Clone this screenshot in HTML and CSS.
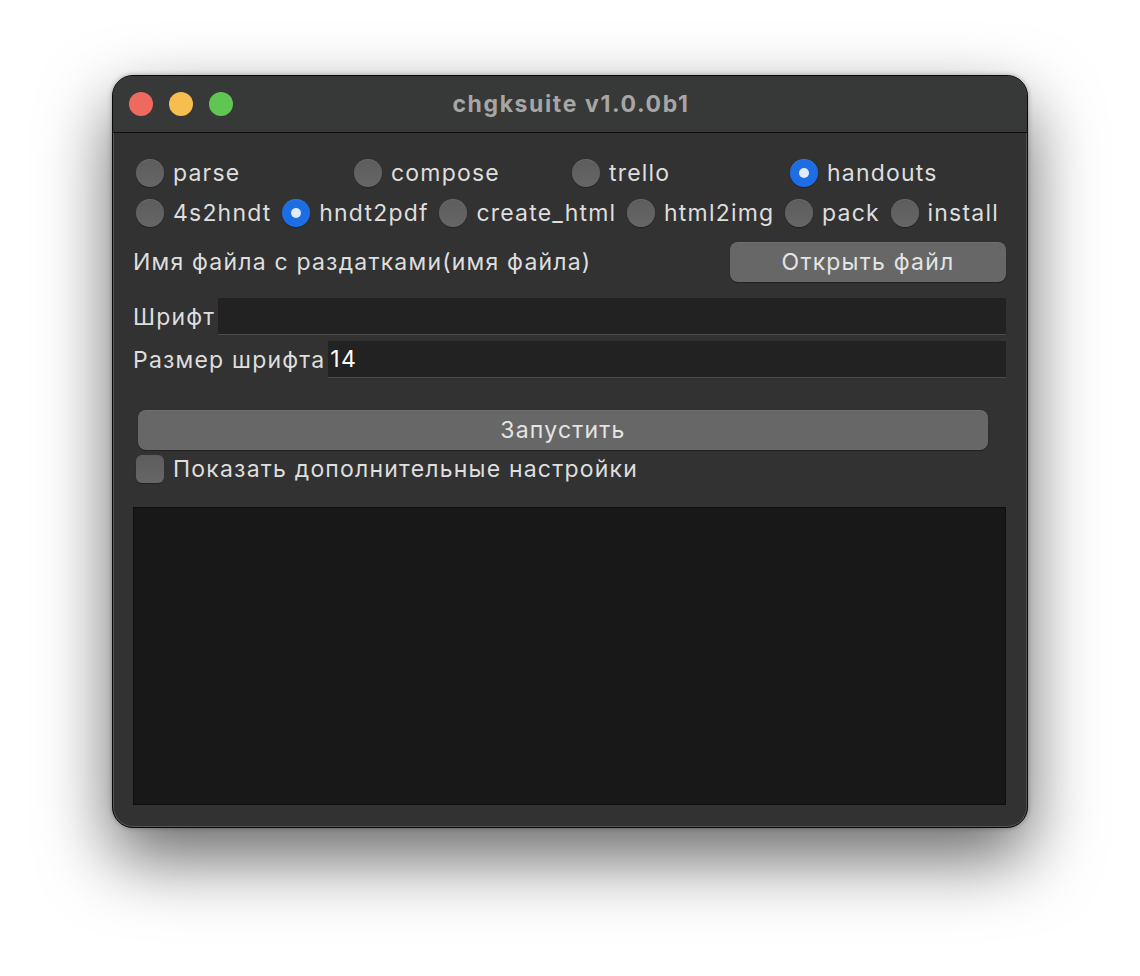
FILE: index.html
```html
<!DOCTYPE html>
<html lang="ru">
<head>
	<meta charset="UTF-8">
	<title>chgksuite v1.0.0b1</title>
	<link rel="stylesheet" href="styles.css">
</head>
<body>
	<div class="window">
		<div class="titlebar">
			<div class="lights">
				<span class="light red"></span>
				<span class="light yellow"></span>
				<span class="light green"></span>
			</div>
			<div class="title">chgksuite v1.0.0b1</div>
		</div>
		<div class="content">
			<div class="row modes">
				<label class="radio"><span class="dot"></span>parse</label>
				<label class="radio"><span class="dot"></span>compose</label>
				<label class="radio"><span class="dot"></span>trello</label>
				<label class="radio"><span class="dot on"></span>handouts</label>
			</div>
			<div class="row subs">
				<label class="radio"><span class="dot"></span>4s2hndt</label>
				<label class="radio"><span class="dot on"></span>hndt2pdf</label>
				<label class="radio"><span class="dot"></span>create_html</label>
				<label class="radio"><span class="dot"></span>html2img</label>
				<label class="radio"><span class="dot"></span>pack</label>
				<label class="radio"><span class="dot"></span>install</label>
			</div>
			<div class="row file">
				<span class="label">Имя файла с раздатками(имя файла)</span>
				<button class="btn open">Открыть файл</button>
			</div>
			<div class="field first">
				<span class="label">Шрифт</span>
				<div class="input"></div>
			</div>
			<div class="field">
				<span class="label">Размер шрифта</span>
				<div class="input">14</div>
			</div>
			<button class="btn run">Запустить</button>
			<label class="check"><span class="box"></span>Показать дополнительные настройки</label>
			<div class="log"></div>
		</div>
	</div>
</body>
</html>
```
FILE: styles.css
```css
* { box-sizing: border-box; }
html, body { min-height: 976px; }
body { margin: 0;padding-top: 75px;background: #fff;font-family: Inter, "Noto Sans", sans-serif;font-size: 23px;letter-spacing: 1.2px;color: #dedede; }
.window { width: 916px;height: 753px;margin: 0 auto;background: #323232;border: 1px solid #0a0a0a;border-radius: 21px;overflow: hidden;box-shadow: inset 0 0 0 1px #555, 0 30px 70px rgba(0,0,0,0.6), 0 0 5px rgba(0,0,0,0.3); }
.titlebar { height: 57px;background: #373838;border-bottom: 1px solid #0c0c0c;display: flex;align-items: center;position: relative; }
.lights { display: flex;gap: 16px;padding-left: 16px; }
.light { width: 24px;height: 24px;border-radius: 50%;display: block; }
.red { background: #ee6a5f; }
.yellow { background: #f5be4f; }
.green { background: #61c554; }
.title { position: absolute;left: 0;right: 0;text-align: center;font-weight: 700;color: #a6a6a6;font-size: 23px;letter-spacing: 1.6px;pointer-events: none;padding-left: 2px; }
.content { padding: 20px 21px 21px 20px;display: flex;flex-direction: column; }
.row { display: flex;align-items: center; }
.modes { height: 40px;display: grid;grid-template-columns: 218px 218px 218px 1fr;padding-left: 3px; }
.subs { height: 40px;justify-content: space-between;padding-left: 3px;padding-right: 7px; }
.radio { display: flex;align-items: center;gap: 9px;white-space: nowrap; }
.dot { width: 28px;height: 28px;border-radius: 50%;background: linear-gradient(#5d5d5d, #666);box-shadow: inset 0 1px 0 rgba(255,255,255,0.08), 0 1px 1px rgba(0,0,0,0.3);position: relative;flex: none; }
.dot.on { background: #1d6de4; }
.dot.on::after { content: "";position: absolute;left: 9px;top: 9px;width: 10px;height: 10px;border-radius: 50%;background: #e1ebfa; }
.file { height: 40px;margin-top: 9px;justify-content: space-between; }
.label { white-space: nowrap; }
.btn { font-family: inherit;font-size: 23px;letter-spacing: 1.2px;color: #e4e4e4;background: #676767;border: none;border-radius: 8px;height: 40px;box-shadow: 0 1px 1px rgba(0,0,0,0.35), inset 0 1px 0 rgba(255,255,255,0.06); }
.open { width: 276px; }
.field { display: flex;align-items: center;height: 37px;margin-top: 6px; }
.field.first { margin-top: 16px; }
.input { flex: 1;height: 37px;background: #222;border-bottom: 1px solid #4c4c4c;color: #fff;line-height: 36px;padding-left: 2px;margin-left: 3px; }
.run { margin: 32px 18px 0 5px; }
.check { display: flex;align-items: center;gap: 9px;height: 38px;padding-left: 3px; }
.box { width: 28px;height: 28px;border-radius: 6px;background: linear-gradient(#5d5d5d, #666);box-shadow: 0 1px 1px rgba(0,0,0,0.3); }
.log { height: 298px;margin-top: 19px;background: #181818;border: 1px solid #0e0e0e; }
```
